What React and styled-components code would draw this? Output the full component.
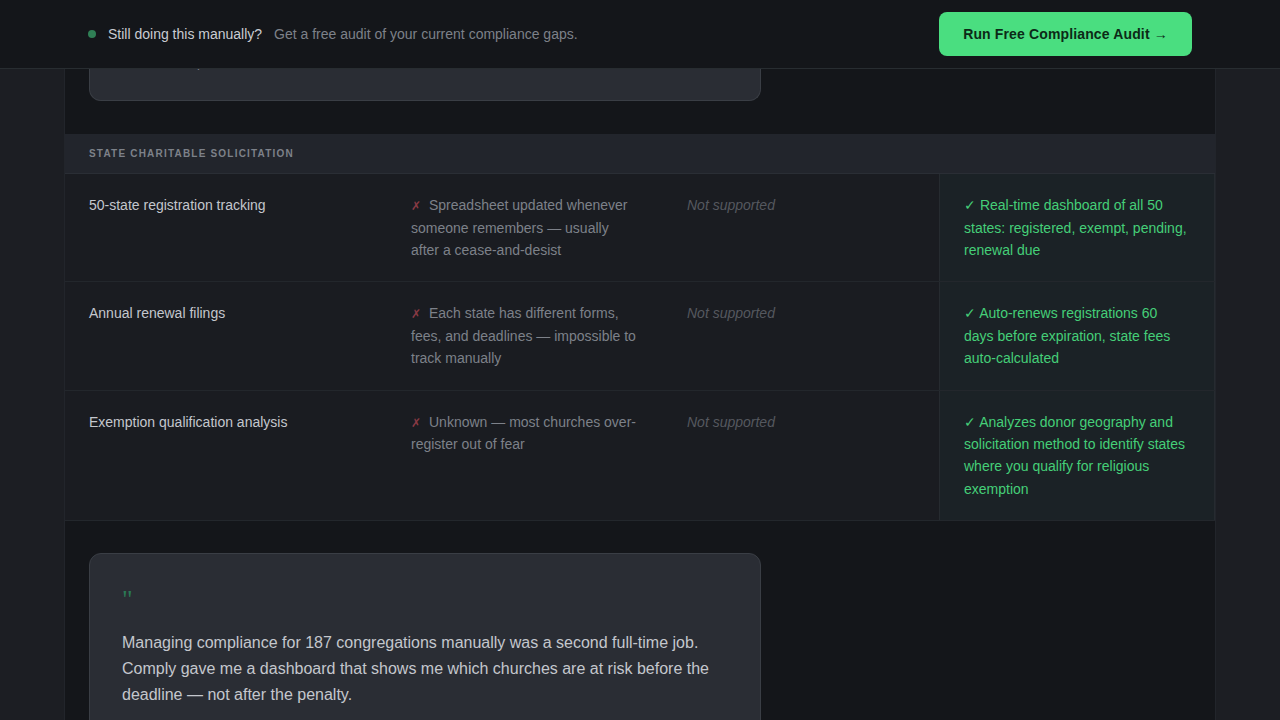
import React from "react";
import styled, { createGlobalStyle } from "styled-components";

const Global = createGlobalStyle`
  html, body { margin: 0; padding: 0; height: 720px; overflow: hidden; background: #1c1e23; }
  body { font-family: "Liberation Sans", Arial, sans-serif; -webkit-font-smoothing: antialiased; }
  * { box-sizing: border-box; }
`;

const Page = styled.div`
  height: 720px;
  overflow: hidden;
  display: flex;
  flex-direction: column;
`;

const Banner = styled.header`
  flex: none;
  height: 69px;
  padding: 0 88px;
  display: flex;
  align-items: center;
  justify-content: space-between;
  background: #14161a;
  border-bottom: 1px solid #282d31;
`;

const BannerLeft = styled.div`
  display: flex;
  align-items: center;
  gap: 12px;
  font-size: 14px;
`;

const Dot = styled.span`
  width: 8px;
  height: 8px;
  border-radius: 50%;
  background: #2f7f55;
`;

const BannerStrong = styled.span`
  color: #c9ccd2;
`;

const BannerMuted = styled.span`
  color: #7d8189;
`;

const AuditButton = styled.button`
  width: 253px;
  height: 44px;
  border: 0;
  border-radius: 8px;
  background: #4ade80;
  color: #0c2a17;
  font: bold 14px "Liberation Sans", Arial, sans-serif;
  letter-spacing: 0.14px;
`;

const Shell = styled.main`
  flex: 1;
  width: 1152px;
  margin: 0 auto;
  background: #14161a;
  border-left: 1px solid #22252b;
  border-right: 1px solid #22252b;
  overflow: hidden;
`;

const ClippedCard = styled.div`
  height: 32px;
  margin: 0 454px 33.2px 24px;
  padding-left: 107px;
  overflow: hidden;
  background: #2a2d34;
  border: 1px solid #3a3e45;
  border-top: 0;
  border-radius: 0 0 12px 12px;
`;

const ClippedLine = styled.div`
  margin-top: -13px;
  color: #7d8189;
  font-size: 13px;
  line-height: 13px;
`;

const SectionHead = styled.div`
  height: 40px;
  padding: 0 24px;
  display: flex;
  align-items: center;
  background: #22252c;
  border-bottom: 1px solid #2a2e35;
  color: #7d8189;
  font-size: 10px;
  font-weight: 700;
  letter-spacing: 1.2px;
`;

const Row = styled.div`
  display: grid;
  grid-template-columns: 28% 24% 24% 24%;
  background: #1a1c21;
  border-bottom: 1px solid #23272c;
  font-size: 14px;
  line-height: 22.4px;
`;

const Cell = styled.div`
  padding: 20px 24px;
`;

const FeatureCell = styled(Cell)`
  color: #c4c7cd;
`;

const ManualCell = styled(Cell)`
  color: #7d8189;
`;

const Cross = styled.span`
  margin-right: 8px;
  color: #8a3a45;
  font-size: 12px;
  line-height: 0;
`;

const Check = styled.span`
  line-height: 0;
`;

const EmptyCell = styled(Cell)`
  color: #55585f;
  font-style: italic;
`;

const ComplyCell = styled(Cell)`
  color: #45cf78;
  background: #1b2226;
  border-left: 1px solid #262b30;
  border-right: 1px solid #262b30;
`;

const QuoteCard = styled.section`
  width: 672px;
  height: 300px;
  margin: 32px 0 0 24px;
  padding: 32px;
  background: #2a2d34;
  border: 1px solid #3a3e45;
  border-radius: 12px;
`;

const QuoteMark = styled.div`
  height: 32px;
  color: #2a7a55;
  font: 26px/28px "Liberation Serif", serif;
`;

const QuoteText = styled.p`
  margin: 12px 0 0;
  color: #c4c7cd;
  font-size: 16px;
  line-height: 26px;
`;

const rows = [
  ["50-state registration tracking", "Spreadsheet updated whenever someone remembers — usually after a cease-and-desist", "Real-time dashboard of all 50 states: registered, exempt, pending, renewal due"],
  ["Annual renewal filings", "Each state has different forms, fees, and deadlines — impossible to track manually", "Auto-renews registrations 60 days before expiration, state fees auto-calculated"],
  ["Exemption qualification analysis", "Unknown — most churches over-register out of fear", "Analyzes donor geography and solicitation method to identify states where you qualify for religious exemption"],
];

export default function App() {
  return (
    <Page>
      <Global />
      <Banner>
        <BannerLeft>
          <Dot />
          <BannerStrong>Still doing this manually?</BannerStrong>
          <BannerMuted>Get a free audit of your current compliance gaps.</BannerMuted>
        </BannerLeft>
        <AuditButton>Run Free Compliance Audit →</AuditButton>
      </Banner>
      <Shell>
        <ClippedCard>
          <ClippedLine>p</ClippedLine>
        </ClippedCard>
        <SectionHead>STATE CHARITABLE SOLICITATION</SectionHead>
        {rows.map(([feature, manual, comply]) => (
          <Row key={feature}>
            <FeatureCell>{feature}</FeatureCell>
            <ManualCell><Cross>✗</Cross>{manual}</ManualCell>
            <EmptyCell>Not supported</EmptyCell>
            <ComplyCell><Check>✓</Check> {comply}</ComplyCell>
          </Row>
        ))}
        <QuoteCard>
          <QuoteMark>"</QuoteMark>
          <QuoteText>Managing compliance for 187 congregations manually was a second full-time job. Comply gave me a dashboard that shows me which churches are at risk before the deadline — not after the penalty.</QuoteText>
        </QuoteCard>
      </Shell>
    </Page>
  );
}
